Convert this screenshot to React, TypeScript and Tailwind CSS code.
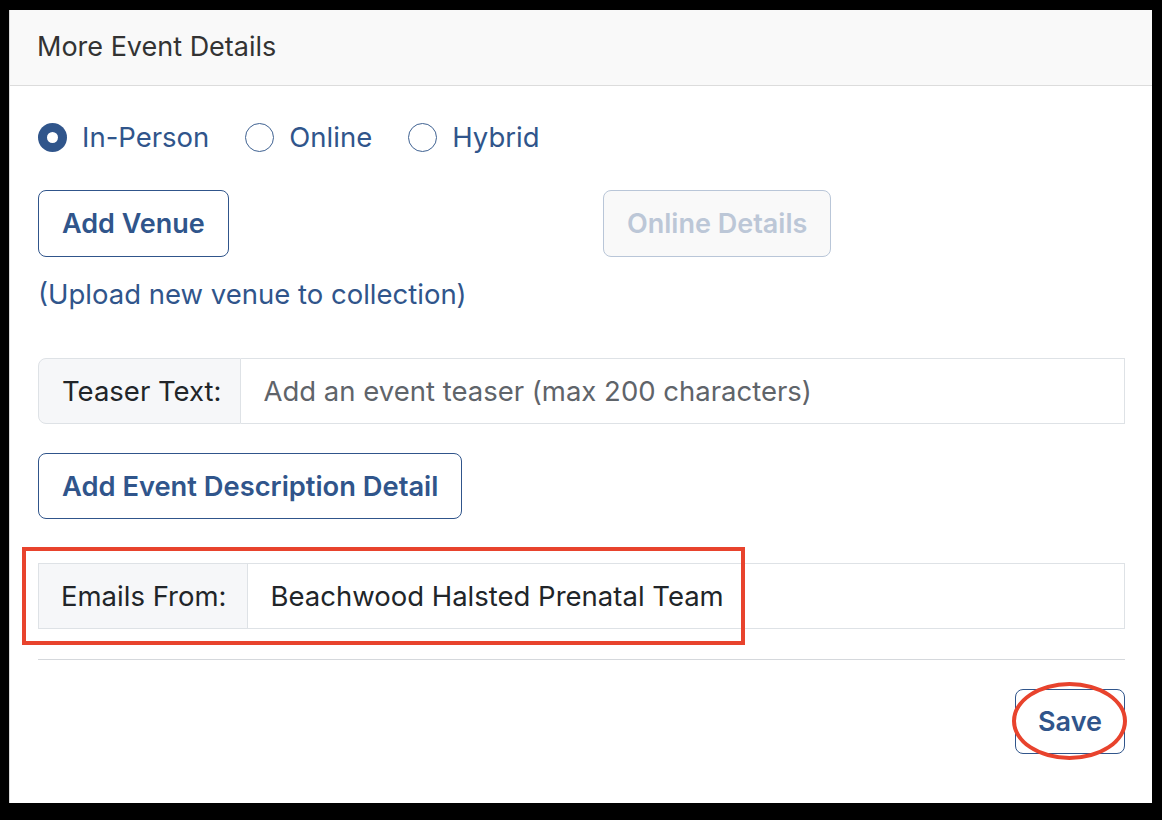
import React, { useState } from "react";

const blue = "text-[#30558b]";

type Mode = "in-person" | "online" | "hybrid";

const modes: { id: Mode; label: string }[] = [
  { id: "in-person", label: "In-Person" },
  { id: "online", label: "Online" },
  { id: "hybrid", label: "Hybrid" },
];

const Radio = ({ checked }: { checked: boolean }) =>
  checked ? (
    <span className="flex h-[29px] w-[29px] items-center justify-center rounded-full bg-[#30558b]">
      <span className="h-[11px] w-[11px] rounded-full bg-white" />
    </span>
  ) : (
    <span className="h-[29px] w-[29px] rounded-full border border-[#3f6292] bg-white" />
  );

const App = () => {
  const [mode, setMode] = useState<Mode>("in-person");

  return (
    <div
      className="min-h-[820px] bg-black pt-[10px] pl-[9px] pr-[10px] pb-[17px]"
      style={{ fontFamily: "Inter, 'Noto Sans', sans-serif" }}
    >
      <div className="h-[793px] border-l border-[#d8d8d8] bg-white">
        {/* card header */}
        <div className="flex h-[76px] items-center border-b border-[#dcdcdc] bg-[#f9f9f9] px-[27px] text-[27px] text-[#333]">
          More Event Details
        </div>

        <div className="pl-[28px] pr-[27px] pt-[31px]">
          {/* event type */}
          <div className="flex h-[40px] items-center gap-[36px]">
            {modes.map((m) => (
              <label
                key={m.id}
                className="flex cursor-pointer items-center gap-[15px]"
                onClick={() => setMode(m.id)}
              >
                <Radio checked={mode === m.id} />
                <span className={`pt-[1px] text-[27.5px] ${blue}`}>{m.label}</span>
              </label>
            ))}
          </div>

          <div className="mt-[33px] grid grid-cols-[565px_1fr]">
            <div>
              <button className="h-[67px] rounded-[8px] border border-[#30558b] bg-white px-[23px] pt-[2px] text-[27px] font-semibold text-[#30558b]">
                Add Venue
              </button>
            </div>
            <div>
              <button
                disabled
                className="h-[67px] rounded-[8px] border border-[#b9c6d8] bg-[#f9f9f9] px-[23px] pt-[2px] text-[27px] font-semibold text-[#bcc7d7]"
              >
                Online Details
              </button>
            </div>
          </div>

          <div className={`mt-[17px] h-[40px] text-[27.5px] leading-[40px] ${blue}`}>
            (Upload new venue to collection)
          </div>

          {/* teaser */}
          <div className="mt-[44px] flex h-[66px] text-[27.5px]">
            <span className="flex items-center rounded-l-[8px] border border-[#dee2e6] bg-[#f6f7f9] pl-[23px] pr-[19px] pt-[2px] text-[#212529]">
              Teaser Text:
            </span>
            <input
              className="flex-1 border border-l-0 border-[#dee2e6] bg-white px-[22px] pt-[2px] text-[#212529] outline-none placeholder:text-[#5f646a]"
              placeholder="Add an event teaser (max 200 characters)"
            />
          </div>

          <button className="mt-[29px] h-[66px] rounded-[8px] border border-[#30558b] bg-white px-[23px] pt-[2px] text-[27.3px] font-semibold text-[#30558b]">
            Add Event Description Detail
          </button>

          {/* sender name */}
          <div className="relative mt-[44px] flex h-[66px] text-[27.5px]">
            <span className="flex items-center border border-[#dee2e6] bg-[#f6f7f9] pl-[22px] pr-[21px] pt-[2px] text-[#212529]">
              Emails From:
            </span>
            <div className="flex flex-1 items-center border border-l-0 border-[#dee2e6] bg-white px-[22px] pt-[2px] text-[#212529]">
              Beachwood Halsted Prenatal Team
            </div>
            <div className="pointer-events-none absolute left-[-16px] top-[-16px] h-[98px] w-[723px] border-[4px] border-[#e8432d]" />
          </div>

          <div className="mt-[30px] h-px bg-[#d5d8dc]" />

          <div className="mt-[29px] flex justify-end">
            <div className="relative">
              <button className="h-[65px] w-[110px] rounded-[8px] border border-[#30558b] bg-white pt-[2px] text-[27px] font-semibold text-[#30558b]">
                Save
              </button>
              <div className="pointer-events-none absolute left-[-3px] top-[-7px] h-[78px] w-[115px] rounded-[50%] border-[4px] border-[#e8432d]" />
            </div>
          </div>
        </div>
      </div>
    </div>
  );
};

export default App;
